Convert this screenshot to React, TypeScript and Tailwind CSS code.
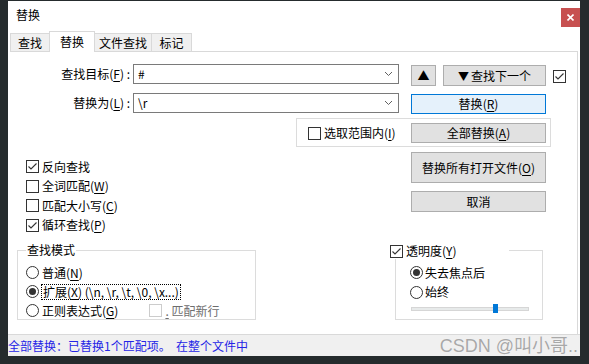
import React from "react";

const Acc = ({ k }: { k: string }) => (
  <span>
    (<span className="underline underline-offset-2">{k}</span>)
  </span>
);

const Check = ({ checked, disabled }: { checked?: boolean; disabled?: boolean }) => (
  <span
    className={`inline-flex w-[13px] h-[13px] shrink-0 items-center justify-center border bg-white ${
      disabled ? "border-[#cccccc]" : "border-[#333333]"
    }`}
  >
    {checked && (
      <svg width="11" height="11" viewBox="0 0 11 11">
        <path d="M1.5 5.5 L4 8 L9.5 2.5" fill="none" stroke="#333333" strokeWidth="1.1" />
      </svg>
    )}
  </span>
);

const Radio = ({ checked }: { checked?: boolean }) => (
  <span className="inline-flex w-[13px] h-[13px] shrink-0 items-center justify-center rounded-full border border-[#333333] bg-white">
    {checked && <span className="w-[7px] h-[7px] rounded-full bg-[#333333]" />}
  </span>
);

const Combo = ({ value }: { value: string }) => (
  <div className="w-[266px] h-[20px] border border-[#7a7a7a] bg-white flex items-center justify-between pl-[4px] pr-[4px]">
    <span className="text-[12px] leading-[16px]">{value}</span>
    <svg width="9" height="6" viewBox="0 0 9 6" className="mr-[1px]">
      <path d="M1 1 L4.5 4.5 L8 1" fill="none" stroke="#606060" strokeWidth="1" />
    </svg>
  </div>
);

const Btn = ({ children, className = "" }: { children: React.ReactNode; className?: string }) => (
  <div
    className={`border border-[#adadad] bg-[#e1e1e1] flex items-center justify-center text-[12px] leading-[16px] ${className}`}
  >
    {children}
  </div>
);

export default function App() {
  return (
    <div
      className="w-[589px] h-[364px] bg-[#252b2d] pt-px pl-2 overflow-hidden text-black"
      style={{ fontFamily: '"Noto Sans CJK SC", sans-serif' }}
    >
      <div className="w-[572px] h-[355px] bg-white flex flex-col">
        {/* title bar */}
        <div className="h-[30px] flex items-start justify-between shrink-0">
          <span className="ml-2 mt-[6px] text-[12px] leading-[16px]">替换</span>
          <div className="mt-[7px] w-[19px] h-[19px] bg-[#c75050] flex items-center justify-center">
            <svg width="7" height="7" viewBox="0 0 7 7">
              <path d="M0.5 0.5 L6.5 6.5 M6.5 0.5 L0.5 6.5" stroke="white" strokeWidth="1.6" />
            </svg>
          </div>
        </div>

        {/* tabs */}
        <div className="h-[20px] ml-[2px] flex items-end shrink-0 text-[12px] leading-[16px]">
          <div className="w-[40px] h-[18px] border border-b-0 border-[#d9d9d9] bg-[#f0f0f0] flex items-center justify-center">
            查找
          </div>
          <div className="relative z-10 w-[46px] h-[21px] -mb-px -ml-px border border-b-0 border-[#d9d9d9] bg-white flex items-start justify-center pt-[2px]">
            替换
          </div>
          <div className="w-[58px] h-[18px] -ml-px border border-b-0 border-[#d9d9d9] bg-[#f0f0f0] flex items-center justify-center">
            文件查找
          </div>
          <div className="w-[41px] h-[18px] -ml-px border border-b-0 border-[#d9d9d9] bg-[#f0f0f0] flex items-center justify-center">
            标记
          </div>
        </div>

        {/* panel */}
        <div className="ml-[2px] w-[568px] h-[283px] border-t border-r border-[#d9d9d9] shrink-0 text-[12px] leading-[16px]">
          {/* Row A */}
          <div className="flex items-start mt-[12px] h-[22px]">
            <div className="w-[120px] h-[20px] flex items-center justify-end">
              查找目标<Acc k="F" />&nbsp;:
            </div>
            <div className="ml-[3px]">
              <Combo value="#" />
            </div>
            <Btn className="ml-[12px] mt-[1px] w-[25px] h-[21px] text-[10px]">▲</Btn>
            <Btn className="ml-[7px] mt-[1px] w-[103px] h-[21px]">
              <span className="text-[11px] mr-[2px]">▼</span>查找下一个
            </Btn>
            <div className="ml-[7px] mt-[6px] flex">
              <Check checked />
            </div>
          </div>

          {/* Row B */}
          <div className="flex items-start mt-[7px] h-[21px]">
            <div className="w-[120px] h-[20px] flex items-center justify-end">
              替换为<Acc k="L" />&nbsp;:
            </div>
            <div className="ml-[3px]">
              <Combo value="\r" />
            </div>
            <div className="ml-[12px] mt-[1px] w-[135px] h-[20px] border border-[#0078d7] bg-[#e5f1fb] flex items-center justify-center">
              替换<Acc k="R" />
            </div>
          </div>

          {/* Row C */}
          <div className="mt-[4px] ml-[286px] w-[255px] h-[29px] border border-[#dcdcdc] flex items-start">
            <div className="ml-[11px] mt-[6px] flex items-center gap-[3px] h-[16px]">
              <Check />
              <span>
                选取范围内<Acc k="I" />
              </span>
            </div>
            <Btn className="ml-auto mr-[4px] mt-[4px] w-[135px] h-[20px]">
              全部替换<Acc k="A" />
            </Btn>
          </div>

          {/* Row D */}
          <div className="flex">
            {/* left column */}
            <div className="w-[379px]">
              <div className="pt-[10px] pl-[16px]">
                {[
                  { c: true, t: <>反向查找</> },
                  { c: false, t: <>全词匹配<Acc k="W" /></> },
                  { c: false, t: <>匹配大小写<Acc k="C" /></> },
                  { c: true, t: <>循环查找<Acc k="P" /></> },
                ].map((r, i) => (
                  <div key={i} className="h-[19.5px] flex items-center gap-[3px]">
                    <Check checked={r.c} />
                    <span>{r.t}</span>
                  </div>
                ))}
              </div>

              <div className="relative mt-[15px] ml-[7px] w-[239px] h-[70px] border border-[#dcdcdc]">
                <span className="absolute left-[8px] -top-[9px] bg-white px-px">查找模式</span>
                <div className="pt-[12px] pl-[8px]">
                  <div className="h-[19px] flex items-center gap-[3px]">
                    <Radio />
                    <span>
                      普通<Acc k="N" />
                    </span>
                  </div>
                  <div className="h-[19px] flex items-center gap-[2px]">
                    <Radio checked />
                    <span className="border border-dotted border-black px-px h-[16px] flex items-center">
                      扩展<Acc k="X" />&nbsp;(\n, \r, \t, \0, \x...)
                    </span>
                  </div>
                  <div className="h-[19px] flex items-center">
                    <Radio />
                    <span className="ml-[3px]">
                      正则表达式<Acc k="G" />
                    </span>
                    <span className="ml-[31px] flex items-center gap-[3px] text-[#6d6d6d]">
                      <Check disabled />
                      <span>
                        <span className="underline underline-offset-2">.</span>&nbsp;匹配新行
                      </span>
                    </span>
                  </div>
                </div>
              </div>
            </div>

            {/* right column */}
            <div className="flex-1">
              <Btn className="ml-[22px] mt-[5px] w-[135px] h-[31px]">
                替换所有打开文件<Acc k="O" />
              </Btn>
              <Btn className="ml-[22px] mt-[8px] w-[135px] h-[21px]">取消</Btn>

              <div className="relative mt-[38px] ml-[6px] w-[148px] h-[70px] border border-[#dcdcdc]">
                <div className="absolute -left-[6px] -top-[8px] w-[119px] h-[16px] bg-white flex items-center gap-[3px]">
                  <Check checked />
                  <span>
                    透明度<Acc k="Y" />
                  </span>
                </div>
                <div className="pt-[12px] pl-[14px]">
                  <div className="h-[19.5px] flex items-center gap-[2px]">
                    <Radio checked />
                    <span>失去焦点后</span>
                  </div>
                  <div className="h-[19.5px] flex items-center gap-[2px]">
                    <Radio />
                    <span>始终</span>
                  </div>
                </div>
                <div className="relative ml-[15px] mt-[5px] w-[118px] h-[4px] bg-[#e7eaea] border border-[#d6d6d6]">
                  <span className="absolute left-[81px] -top-[4px] w-[5px] h-[9px] bg-[#0078d7]" />
                </div>
              </div>
            </div>
          </div>
        </div>

        {/* status bar */}
        <div className="h-[22px] border-t border-[#d9d9d9] bg-[#f0f0f0] flex items-center justify-between shrink-0">
          <span className="text-[12px] leading-[16px] text-[#2424e6]">全部替换：已替换1个匹配项。&nbsp;&nbsp;在整个文件中</span>
          <span
            className="mr-[2px] text-[18px] leading-[20px] text-[#a8a8a8]"
            style={{ fontFamily: '"Liberation Sans", "Noto Sans CJK SC", sans-serif', textShadow: "0 0 1px #ffffff" }}
          >
            CSDN @叫小哥..
          </span>
        </div>
      </div>
    </div>
  );
}
